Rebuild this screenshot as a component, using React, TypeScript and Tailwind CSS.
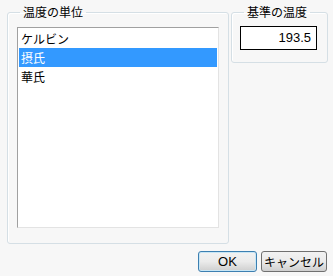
import React from "react"

const units = ["ケルビン", "摂氏", "華氏"]

export default function App() {
  const selected = 1

  return (
    <div className="w-[333px] h-[276px] bg-[#f7f7f7] text-[12px] text-black font-['Noto_Sans_CJK_JP','Noto_Sans_CJK_SC',sans-serif] overflow-hidden">
      <div className="flex gap-[2px] pl-[7px] pt-[4px]">
        {/* 温度の単位 */}
        <fieldset className="w-[222px] h-[240px] border border-[#d5dfe5] rounded-[3px] pl-[9px] pt-[7px] shadow-[inset_1px_1px_0_#ffffff]">
          <legend className="ml-[3px] px-[3px] leading-[16px]">温度の単位</legend>
          <div className="w-[202px] h-[201px] bg-white border border-t-[#a0a0a0] border-l-[#a0a0a0] border-r-[#e3e3e3] border-b-[#e3e3e3] p-[1px]">
            {units.map((u, i) => (
              <div
                key={u}
                className={
                  i === selected
                    ? "h-[19px] leading-[19px] pl-[2px] bg-[#3399ff] text-white"
                    : "h-[19px] leading-[19px] pl-[2px]"
                }
              >
                {u}
              </div>
            ))}
          </div>
        </fieldset>

        {/* 基準の温度 */}
        <fieldset className="w-[97px] h-[59px] border border-[#d5dfe5] rounded-[3px] pl-[8px] pt-[6px] shadow-[inset_1px_1px_0_#ffffff]">
          <legend className="ml-[4px] px-[3px] leading-[16px]">基準の温度</legend>
          <div className="w-[77px] h-[24px] bg-white border border-black flex items-center justify-end pr-[5px] font-['Liberation_Sans',sans-serif] text-[13px]">
            193.5
          </div>
        </fieldset>
      </div>

      {/* buttons */}
      <div className="flex justify-end gap-[4px] pr-[6px] mt-[7px]">
        <button className="w-[59px] h-[21px] rounded-[3px] border border-[#3c7fb1] bg-gradient-to-b from-[#f2f2f2] via-[#ebebeb] to-[#cfcfcf] shadow-[inset_0_0_0_1px_#c8e6f5] font-['Liberation_Sans',sans-serif] text-[13px] leading-[19px]">
          OK
        </button>
        <button className="w-[66px] h-[21px] rounded-[3px] border border-[#707070] bg-gradient-to-b from-[#f2f2f2] via-[#ebebeb] to-[#cfcfcf] leading-[19px]">
          キャンセル
        </button>
      </div>
    </div>
  )
}
